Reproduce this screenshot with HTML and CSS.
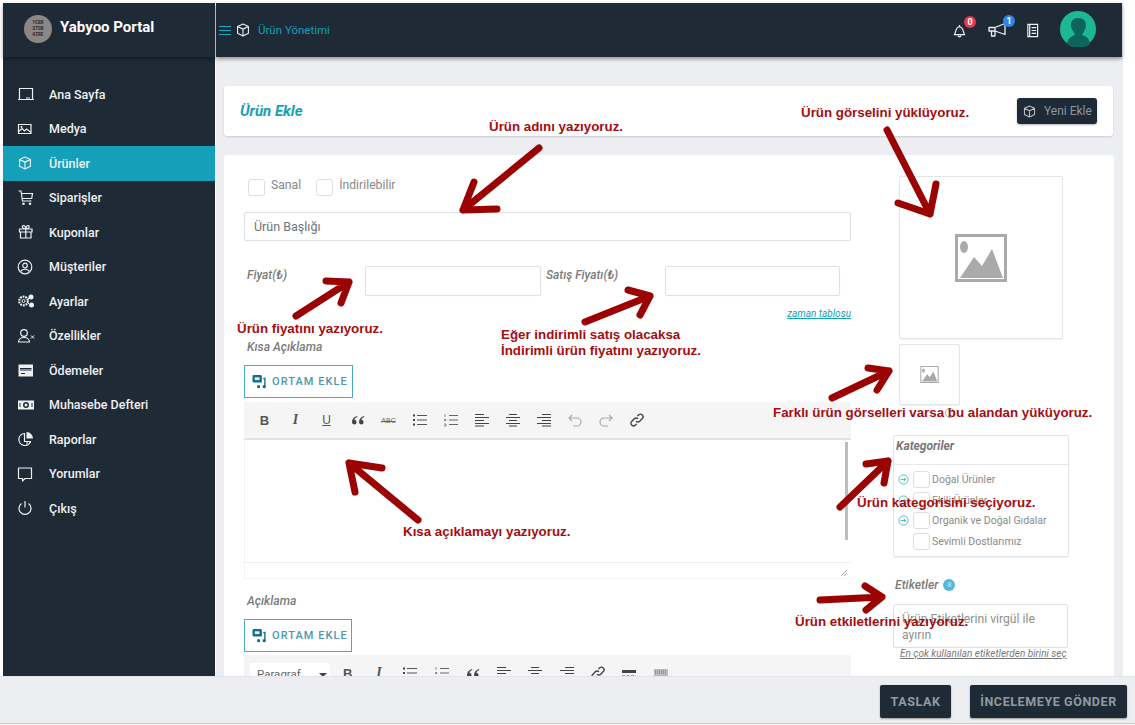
FILE: index.html
```html
<!DOCTYPE html>
<html lang="tr">
<head>
<meta charset="utf-8">
<title>Ürün Ekle</title>
<link rel="stylesheet" href="styles.css">
</head>
<body>
<svg class="defs" width="0" height="0">
  <symbol id="cube" viewBox="0 0 16 16"><path d="M8 1.2 14.2 4v7.6L8 14.8 1.8 11.6V4ZM1.8 4 8 7l6.2-3M8 7v7.8" fill="none" stroke="currentColor" stroke-width="1.3" stroke-linejoin="round"/></symbol>
  <symbol id="media" viewBox="0 0 16 16"><path d="M2 1h7a1.500 1.500 0 0 1 1.500 1.500V9H2a1.500 1.500 0 0 1-1.500-1.500v-5A1.500 1.500 0 0 1 2 1Z" fill="#11708f"/><path d="M3 3.500h5v3H3z" fill="#dff0f5"/><circle cx="7" cy="13.500" r="1.700" fill="#11708f"/><circle cx="13" cy="13.500" r="1.700" fill="#11708f"/><path d="M12 4h2.500v9.500H13V5.500h-1z" fill="#11708f"/></symbol>
  <symbol id="pic" viewBox="0 0 52 48"><path d="M1.500 1.500h49v45h-49z" fill="none" stroke="#aaa" stroke-width="3"/><ellipse cx="9" cy="13" rx="4" ry="6" fill="#aaa"/><path d="M5 44 19 23l8 9 10-17 11 29z" fill="#aaa"/></symbol>
  <symbol id="list" viewBox="0 0 14 14"><path d="M4 2.500h10M4 7h10M4 11.500h10" stroke="#555" stroke-width="1.100"/><path d="M0 2.500h2M0 7h2M0 11.500h2" stroke="#444" stroke-width="2"/></symbol>
  <symbol id="olist" viewBox="0 0 14 14"><path d="M5 2.500h9M5 7h9M5 11.500h9" stroke="#666" stroke-width="1.100"/><path d="M1 1v3M0 6.500h2v1H0M0 11h2v2H0" stroke="#777" stroke-width=".8" fill="none"/></symbol>
  <symbol id="aleft" viewBox="0 0 14 14"><path d="M0 1.500h9M0 4.500h14M0 7.500h9M0 10.500h14M0 13h9" stroke="#444" stroke-width="1.200"/></symbol>
  <symbol id="acenter" viewBox="0 0 14 14"><path d="M3 1.500h8M0 4.500h14M3 7.500h8M0 10.500h14M3 13h8" stroke="#444" stroke-width="1.200"/></symbol>
  <symbol id="aright" viewBox="0 0 14 14"><path d="M5 1.500h9M0 4.500h14M5 7.500h9M0 10.500h14M5 13h9" stroke="#444" stroke-width="1.200"/></symbol>
  <symbol id="link" viewBox="0 0 14 14"><path d="M6 8.200a2.600 2.600 0 0 0 3.700 0l2.600-2.600a2.600 2.600 0 0 0-3.700-3.700L7.400 3.100M8 5.800a2.600 2.600 0 0 0-3.700 0L1.700 8.400a2.600 2.600 0 0 0 3.700 3.700l1.200-1.200" fill="none" stroke="#444" stroke-width="1.400"/></symbol>
  <symbol id="quote" viewBox="0 0 14 14"><path d="M6 3C3 4 1 6 1 9a2.300 2.300 0 1 0 2.400-2.200C3.700 5.500 4.800 4.500 6.400 4ZM13 3c-3 1-5 3-5 6a2.300 2.300 0 1 0 2.400-2.200c.3-1.300 1.400-2.300 3-2.800Z" fill="#444"/></symbol>
  <symbol id="go" viewBox="0 0 12 12"><circle cx="6" cy="6" r="5" fill="none" stroke="#3fb6bf"/><path d="M3 6h5.500M6.200 3.800 8.500 6 6.200 8.200" fill="none" stroke="#3fb6bf"/></symbol>
</svg>
<div class="app">
  <aside class="sidebar">
    <div class="brand">
      <span class="brand-logo"><span>YCBR<br>STOR<br>HIRE</span></span>
      <span class="brand-name">Yabyoo Portal</span>
    </div>
    <nav class="nav">
      <a class="nav-item"><svg class="nav-ico" viewBox="0 0 18 18"><path d="M2.500 3.500h13v11h-13zM1 14.500h16M9 13h4" fill="none" stroke="currentColor" stroke-width="1.200"/></svg>Ana Sayfa</a>
      <a class="nav-item"><svg class="nav-ico" viewBox="0 0 18 18"><path d="M1.500 4.500h12.500v9H1.500zM1.500 11.500l3.500-3 2.500 2.500 2-2 4 3" fill="none" stroke="currentColor" stroke-width="1.200"/><circle cx="4.500" cy="7" r="1" fill="currentColor"/></svg>Medya</a>
      <a class="nav-item active"><svg class="nav-ico" viewBox="0 0 18 18"><use href="#cube" x="1" y="2" width="14" height="14"/></svg>Ürünler</a>
      <a class="nav-item"><svg class="nav-ico" viewBox="0 0 18 18"><path d="M1.500 2h2.500l1.500 10h9M4.300 4.500H15.500l-.8 5H5" fill="none" stroke="currentColor" stroke-width="1.200"/><circle cx="6.500" cy="14.800" r="1.300" fill="currentColor"/><circle cx="13" cy="14.800" r="1.300" fill="currentColor"/></svg>Siparişler</a>
      <a class="nav-item"><svg class="nav-ico" viewBox="0 0 18 18"><path d="M2.500 6h12.500v3H2.500zM3.500 9h10.500v6H3.500zM8.800 6v9M8.800 6C5 6 4.500 2.500 6.500 2.500S8.800 6 8.800 6c0 0 .3-3.500 2.300-3.500S12.500 6 8.800 6Z" fill="none" stroke="currentColor" stroke-width="1.200"/></svg>Kuponlar</a>
      <a class="nav-item"><svg class="nav-ico" viewBox="0 0 18 18"><circle cx="8" cy="9" r="6.800" fill="none" stroke="currentColor" stroke-width="1.200"/><circle cx="8" cy="7.500" r="2.300" fill="none" stroke="currentColor" stroke-width="1.200"/><path d="M3.800 13.500c1-3 7.400-3 8.400 0" fill="none" stroke="currentColor" stroke-width="1.200"/></svg>Müşteriler</a>
      <a class="nav-item"><svg class="nav-ico" viewBox="0 0 18 18"><circle cx="6.500" cy="9" r="4.300" fill="none" stroke="currentColor" stroke-width="2.200" stroke-dasharray="1.800 .9"/><circle cx="6.500" cy="9" r="1.500" fill="none" stroke="currentColor"/><circle cx="14" cy="5" r="2.500" fill="currentColor"/><circle cx="14.500" cy="13" r="2.500" fill="currentColor"/><path d="M10.500 7l2-1M10.500 11l2 1" stroke="currentColor"/></svg>Ayarlar</a>
      <a class="nav-item"><svg class="nav-ico" viewBox="0 0 18 18"><circle cx="7" cy="6" r="3.300" fill="none" stroke="currentColor" stroke-width="1.200"/><path d="M1.500 15c0-6 11-6 11 0z" fill="none" stroke="currentColor" stroke-width="1.200"/><path d="M14 8.500l3 3M17 8.500l-3 3" stroke="currentColor"/></svg>Özellikler</a>
      <a class="nav-item"><svg class="nav-ico" viewBox="0 0 18 18"><path d="M1.500 3.500h14.500v12H1.500z" fill="currentColor"/><path d="M3 7.500h11.500M3 9h11.500" stroke="#1e2a36" stroke-width="1.200"/><path d="M4 12.500h4" stroke="#1e2a36"/></svg>Ödemeler</a>
      <a class="nav-item"><svg class="nav-ico" viewBox="0 0 18 18"><path d="M1 4.500h16v9H1z" fill="currentColor"/><circle cx="9" cy="9" r="3" fill="#1e2a36"/><circle cx="9" cy="9" r="1.500" fill="currentColor"/><path d="M3 7v4M15 7v4" stroke="#1e2a36"/></svg>Muhasebe Defteri</a>
      <a class="nav-item"><svg class="nav-ico" viewBox="0 0 18 18"><path d="M7.500 3.500a6 6 0 1 0 6 8H7.500z" fill="none" stroke="currentColor" stroke-width="1.200"/><path d="M9.500 2v6.500H16A6.500 6.500 0 0 0 9.500 2Z" fill="currentColor"/><path d="M10 11v4M13 11v2" stroke="currentColor"/></svg>Raporlar</a>
      <a class="nav-item"><svg class="nav-ico" viewBox="0 0 18 18"><path d="M1.500 3h13v10.500H8L5.500 16v-2.500h-4z" fill="none" stroke="currentColor" stroke-width="1.200" stroke-linejoin="round"/></svg>Yorumlar</a>
      <a class="nav-item"><svg class="nav-ico" viewBox="0 0 18 18"><path d="M4.500 4.500a6 6 0 1 0 7 0M8 2v6.500" fill="none" stroke="currentColor" stroke-width="1.200"/></svg>Çıkış</a>
    </nav>
  </aside>

  <div class="main">
    <header class="topbar">
      <span class="hamburger"><i></i><i></i><i></i></span>
      <svg class="crumb-ico"><use href="#cube"/></svg>
      <span class="crumb">Ürün Yönetimi</span>
      <div class="top-actions">
        <span class="top-ico ico-bell"><svg viewBox="0 0 16 16"><path d="M2.500 12.500c1.700-1.500.8-8 5.500-8.500 4.700.5 3.800 7 5.500 8.500zM6.300 13.500a1.800 1.800 0 0 0 3.400 0M8 2v2" fill="none" stroke="currentColor" stroke-width="1.300" stroke-linejoin="round"/></svg><b class="badge red">0</b></span>
        <span class="top-ico ico-mega"><svg viewBox="0 0 19 16"><path d="M1 5.500h6l10-4v11l-10-3.500H1zM3.500 9v5h3.500V9M7 5.500V9" fill="none" stroke="currentColor" stroke-width="1.300" stroke-linejoin="round"/></svg><b class="badge blue">1</b></span>
        <span class="top-ico ico-book"><svg viewBox="0 0 14 16"><path d="M2 1.500h10.500v13H2zM4 1.500v13M6 5h5M6 8h5M6 11h5" fill="none" stroke="currentColor" stroke-width="1.300"/></svg></span>
        <span class="avatar"><svg viewBox="0 0 36 36"><circle cx="18" cy="18" r="18" fill="#1eb795"/><path d="M7 33c1-7 6-8 8-9 0-2-3-4-4-9 0-6 3-8 7-8 6 0 8 3 8 8-1 5-3 7-4 9 3 1 7 2 8 9a18 18 0 0 1-23 0Z" fill="#0c6558"/></svg></span>
      </div>
    </header>

    <div class="content">
      <section class="page-head">
        <h1 class="page-title">Ürün Ekle</h1>
        <button class="new-btn"><svg class="new-ico"><use href="#cube"/></svg>Yeni Ekle</button>
      </section>

      <section class="card">
        <div class="left">
          <div class="checks">
            <label class="check-label"><span class="box"></span>Sanal</label>
            <label class="check-label"><span class="box"></span>İndirilebilir</label>
          </div>
          <div class="field title-field">Ürün Başlığı</div>
          <div class="price-row">
            <span class="label price-a">Fiyat(₺)</span>
            <span class="field price-in-a"></span>
            <span class="label price-b">Satış Fiyatı(₺)</span>
            <span class="field price-in-b"></span>
          </div>
          <a class="schedule">zaman tablosu</a>
          <div class="label short-label">Kısa Açıklama</div>
          <button class="media-btn"><svg class="media-ico"><use href="#media"/></svg>ORTAM EKLE</button>
          <div class="editor">
            <div class="toolbar">
              <span class="tb tb-b">B</span><span class="tb tb-i">I</span><span class="tb tb-u">U</span><span class="tb"><svg class="tbi"><use href="#quote"/></svg></span><span class="tb tb-abc">ABC</span>
              <span class="tb"><svg class="tbi"><use href="#list"/></svg></span>
              <span class="tb"><svg class="tbi"><use href="#olist"/></svg></span>
              <span class="tb"><svg class="tbi"><use href="#aleft"/></svg></span>
              <span class="tb"><svg class="tbi"><use href="#acenter"/></svg></span>
              <span class="tb"><svg class="tbi"><use href="#aright"/></svg></span>
              <span class="tb"><svg class="tbi" viewBox="0 0 14 14"><path d="M1 5h8a4 4 0 0 1 0 8H5M4 2 1 5l3 3" fill="none" stroke="#aaa" stroke-width="1.200"/></svg></span>
              <span class="tb"><svg class="tbi" viewBox="0 0 14 14"><path d="M13 5H5a4 4 0 0 0 0 8h4M10 2l3 3-3 3" fill="none" stroke="#aaa" stroke-width="1.200"/></svg></span>
              <span class="tb"><svg class="tbi"><use href="#link"/></svg></span>
            </div>
            <div class="editor-body"><span class="scroll"></span></div>
            <div class="editor-foot"><svg class="grip" viewBox="0 0 8 8"><path d="M7 1 1 7M7 4 4 7" stroke="#aaa"/></svg></div>
          </div>
          <div class="label long-label">Açıklama</div>
          <button class="media-btn media-btn-2"><svg class="media-ico"><use href="#media"/></svg>ORTAM EKLE</button>
          <div class="toolbar toolbar-2">
            <span class="select">Paragraf<i class="caret"></i></span>
            <span class="tb tb-b">B</span><span class="tb tb-i">I</span>
            <span class="tb"><svg class="tbi"><use href="#list"/></svg></span>
            <span class="tb"><svg class="tbi"><use href="#olist"/></svg></span>
            <span class="tb"><svg class="tbi"><use href="#quote"/></svg></span>
            <span class="tb"><svg class="tbi"><use href="#aleft"/></svg></span>
            <span class="tb"><svg class="tbi"><use href="#acenter"/></svg></span>
            <span class="tb"><svg class="tbi"><use href="#aright"/></svg></span>
            <span class="tb"><svg class="tbi"><use href="#link"/></svg></span>
            <span class="tb"><svg class="tbi" viewBox="0 0 14 14"><path d="M0 4h14v3H0z" fill="#444"/><path d="M0 10h14" stroke="#444" stroke-dasharray="3 1.500"/></svg></span>
            <span class="tb"><svg class="tbi" viewBox="0 0 14 14"><path d="M0 3h14v8H0z" fill="#bbb"/><path d="M1 5h12M1 7h12" stroke="#777" stroke-dasharray="1 1"/></svg></span>
          </div>
        </div>

        <div class="right">
          <div class="image-box"><svg class="pic-lg"><use href="#pic"/></svg></div>
          <div class="image-box image-small"><svg class="pic-sm"><use href="#pic"/></svg></div>
          <span class="dot"></span>
          <div class="cats">
            <div class="cats-title">Kategoriler</div>
            <ul class="cat-list">
              <li class="cat"><svg class="go"><use href="#go"/></svg><span class="box"></span>Doğal Ürünler</li>
              <li class="cat"><svg class="go"><use href="#go"/></svg><span class="box"></span>Ekili Ürünler</li>
              <li class="cat"><svg class="go"><use href="#go"/></svg><span class="box"></span>Organik ve Doğal Gıdalar</li>
              <li class="cat"><span class="go"></span><span class="box"></span>Sevimli Dostlarımız</li>
            </ul>
          </div>
          <div class="tags-head"><span class="label tags-label">Etiketler</span><span class="info">8</span></div>
          <div class="tags-input">Ürün Etiketlerini virgül ile ayırın</div>
          <a class="tags-link">En çok kullanılan etiketlerden birini seç</a>
        </div>
      </section>
    </div>
  </div>
</div>

<footer class="actions">
  <button class="dark-btn btn-draft">TASLAK</button>
  <button class="dark-btn btn-send">İNCELEMEYE GÖNDER</button>
</footer>

<svg class="arrows" viewBox="0 0 1135 725">
  <g fill="none" stroke="#9b0303" stroke-width="7" stroke-linecap="round" stroke-linejoin="round">
    <path d="M539 148 463 210M474 182 463 210 497 209"/>
    <path d="M887 130 930 214M898 203 930 214 936 184"/>
    <path d="M296 316 349 282M326 281 349 282 341 303"/>
    <path d="M585 322 650 296M628 290 650 296 640 315"/>
    <path d="M832 398 889 371M868 368 889 371 877 390"/>
    <path d="M840 507 888 461M866 464 888 461 884 483"/>
    <path d="M820 600 882 597M865 586 882 597 866 610"/>
    <path d="M418 520 349 463M355 492 349 463 382 468"/>
  </g>
</svg>
<span class="note note-name">Ürün adını yazıyoruz.</span>
<span class="note note-image">Ürün görselini yüklüyoruz.</span>
<span class="note note-price">Ürün fiyatını yazıyoruz.</span>
<span class="note note-sale">Eğer indirimli satış olacaksa<br>İndirimli ürün fiyatını yazıyoruz.</span>
<span class="note note-gallery">Farklı ürün görselleri varsa bu alandan yüküyoruz.</span>
<span class="note note-cat">Ürün kategorisini seçiyoruz.</span>
<span class="note note-short">Kısa açıklamayı yazıyoruz.</span>
<span class="note note-tags">Ürün etkiletlerini yazıyoruz.</span>
</body>
</html>
```
FILE: styles.css
```css
* { box-sizing: border-box; }
html, body { margin: 0; height: 725px; overflow: hidden; background: #fff; }
body { font-family: Roboto, "Liberation Sans", sans-serif; position: relative; }
.defs { position: absolute; }
button { font-family: inherit; cursor: pointer; }

.app { display: flex; height: 723px; padding: 3px 12px 0 3px; overflow: hidden; }

/* sidebar */
.sidebar { width: 212px; flex: none; background: #1e2a36; color: #f0f2f4; }
.brand { height: 54px; display: flex; align-items: center; padding-left: 21px; gap: 8px; box-shadow: 0 2px 4px rgba(0,0,0,.35); padding-bottom: 2px; }
.brand-logo { width: 28px; height: 28px; border-radius: 50%; background: #8a8786; display: flex; align-items: center; justify-content: center; text-align: center; font: 700 4.500px/1.300 "Liberation Mono", monospace; color: #2b2a2a; }
.brand-name { font-weight: 700; font-size: 15px; color: #fff; margin-top: -5px; }
.nav { padding-top: 20px; display: flex; flex-direction: column; }
.nav-item { height: 34.500px; display: flex; align-items: center; padding-left: 14px; font-size: 12.500px; font-weight: 500; color: #eef0f2; }
.nav-item.active { background: #14a0b8; }
.nav-ico { width: 18px; height: 18px; margin-right: 14px; flex: none; color: #eef0f2; }

/* main */
.main { flex: 1; min-width: 0; margin-left: 1px; background: #eceef2; display: flex; flex-direction: column; }
.topbar { height: 54px; flex: none; margin-right: 1px; background: #1e2a36; display: flex; align-items: center; padding-left: 3px; box-shadow: 0 2px 4px rgba(0,0,0,.4); }
.hamburger { width: 12px; display: flex; flex-direction: column; gap: 3px; margin-right: 5px; }
.hamburger i { display: block; height: 1px; background: #21a8c2; }
.crumb-ico { width: 14px; height: 14px; color: #e8ecef; margin-right: 8px; }
.crumb { font-size: 11.500px; color: #149fb5; }
.top-actions { margin-left: auto; display: flex; align-items: center; }
.top-ico { position: relative; color: #eef1f3; display: block; }
.top-ico svg { display: block; width: 100%; height: 100%; }
.ico-bell { width: 15px; height: 15px; margin-right: 21px; }
.ico-mega { width: 19px; height: 16px; margin-right: 19px; }
.ico-book { width: 13px; height: 15px; margin-right: 21px; }
.badge { position: absolute; top: -7px; left: 12px; width: 12px; height: 12px; border-radius: 50%; color: #fff; font-size: 9px; line-height: 12px; text-align: center; font-weight: 700; }
.badge.red { background: #e53a4b; }
.badge.blue { background: #2f86e8; left: 15px; }
.avatar { width: 36px; height: 36px; margin-right: 26px; margin-top: -2px; }
.avatar svg { display: block; }

.content { padding: 29px 9px 0 8px; flex: 1; min-height: 0; }
.page-head { height: 50px; margin-right: 1px; background: #fff; border-radius: 3px; display: flex; align-items: center; justify-content: space-between; padding: 0 16px 0 16px; box-shadow: 0 1px 2px rgba(0,0,0,.14); }
.page-title { margin: 0; font-size: 15px; font-weight: 700; font-style: italic; color: #149fb0; }
.new-btn { height: 26px; width: 80px; padding: 0 0 0 6px; background: #1e2a36; border: 0; border-radius: 3px; color: #8b969e; font-size: 12px; display: flex; align-items: center; gap: 8px; box-shadow: 0 1px 2px rgba(0,0,0,.3); }
.new-ico { width: 13px; height: 13px; color: #b9c1c7; }

.card { margin-top: 19px; height: 560px; background: #fff; border-radius: 3px; padding: 21px 20px 0; display: grid; grid-template-columns: 607px 176px; column-gap: 42px; overflow: hidden; }
.left { padding-top: 3px; min-width: 0; }
.checks { display: flex; gap: 15px; padding-left: 4px; height: 17px; }
.check-label { display: flex; gap: 6px; font-size: 12.200px; color: #888; line-height: 12px; }
.box { display: block; flex: none; width: 17px; height: 17px; border: 1px solid #dcdfe2; border-radius: 3px; background: #fff; }
.field { display: block; flex: none; height: 29px; background: #fff; border: 1px solid #dfe1e4; border-radius: 2px; box-shadow: 0 0 1px rgba(0,0,0,.08); font-size: 12.500px; color: #6f7478; line-height: 27px; padding-left: 9px; }
.title-field { margin-top: 16px; }
.price-row { margin-top: 25px; display: flex; align-items: flex-start; }
.label { font-size: 12.200px; font-weight: 500; font-style: italic; color: #7a7a7a; }
.price-a, .price-b { font-size: 12px; line-height: 19px; flex: none; }
.price-a { width: 121px; padding-left: 3px; }
.price-in-a { width: 176px; height: 30px; }
.price-b { width: 119px; margin-left: 5px; }
.price-in-b { width: 175px; height: 30px; }
.schedule { display: block; text-align: right; font-size: 10px; font-style: italic; color: #14a0b0; text-decoration: underline; margin-top: 12px; line-height: 12px; }
.short-label { margin-top: 20px; padding-left: 3px; line-height: 14px; }
.media-btn { display: flex; align-items: center; gap: 5px; margin-top: 11px; width: 109px; height: 33px; padding: 0 0 0 7px; background: #fff; border: 1px solid #4ba9c0; font-size: 11px; font-weight: 500; letter-spacing: 1.050px; color: #4d98ad; white-space: nowrap; }
.media-ico { width: 15px; height: 15px; flex: none; }
.editor { margin-top: 4px; }
.toolbar { height: 36px; background: #f5f5f5; display: flex; align-items: center; padding-left: 5px; }
.tb { width: 31px; height: 16px; display: flex; align-items: center; justify-content: center; flex: none; font-size: 13px; color: #555; font-family: "Liberation Serif", serif; }
.tb-b { font: 700 13px "Liberation Sans", sans-serif; color: #555; }
.tb-i { font: italic 700 14px "Liberation Serif", serif; color: #555; }
.tb-u { font: 12px "Liberation Sans", sans-serif; text-decoration: underline; color: #555; }
.tb-abc { font: 7px "Liberation Sans", sans-serif; color: #666; text-decoration: line-through; }
.tbi { width: 14px; height: 14px; display: block; }
.editor-body { height: 124px; border-top: 2px solid #e2e2e2; border-left: 1px solid #f2f2f2; display: flex; justify-content: flex-end; padding: 2px 3px 0 0; }
.scroll { width: 3px; height: 98px; background: #bdbdbd; }
.editor-foot { height: 17px; border-top: 1px solid #eee; border-bottom: 1px solid #f4f4f4; border-left: 1px solid #f2f2f2; display: flex; justify-content: flex-end; align-items: flex-end; padding: 0 3px 1px 0; }
.grip { width: 8px; height: 8px; }
.long-label { margin-top: 15px; padding-left: 3px; line-height: 14px; }
.media-btn-2 { width: 108px; }
.toolbar-2 { margin-top: 3px; align-items: flex-start; padding: 8px 0 0 6px; height: 40px; }
.select { width: 80px; height: 24px; margin-right: 2px; background: #fff; border-radius: 2px; font-size: 11.500px; color: #666; padding: 4px 0 0 7px; position: relative; }
.caret { position: absolute; right: 3px; top: 10px; border: 4px solid transparent; border-top: 4px solid #444; border-bottom: 0; }
.toolbar-2 .tb { margin-top: 2px; width: 31.300px; }

.right { min-width: 0; }
.image-box { width: 164px; height: 163px; margin-left: 6px; border: 1px solid #e3e5e7; border-radius: 2px; box-shadow: 0 1px 1px rgba(0,0,0,.05); display: flex; align-items: center; justify-content: center; }
.pic-lg { width: 52px; height: 48px; }
.image-small { width: 61px; height: 61px; margin-top: 5px; }
.pic-sm { width: 19px; height: 17px; }
.dot { display: block; width: 10px; height: 10px; margin: 3px 0 0 52px; border: 1px solid #aaa; border-radius: 50%; }
.cats { margin-top: 17px; width: 176px; height: 122px; border: 1px solid #e3e5e7; border-radius: 2px; box-shadow: 0 1px 1px rgba(0,0,0,.06); }
.cats-title { height: 29px; border-bottom: 1px solid #e6e8ea; padding: 3px 0 0 2px; font-size: 12px; font-weight: 700; font-style: italic; color: #777; line-height: 14px; }
.cat-list { list-style: none; margin: 0; padding: 4px 0 0 4px; }
.cat { height: 20.700px; display: flex; align-items: center; font-size: 10.500px; color: #8a8a8a; }
.go { display: block; width: 11px; height: 11px; flex: none; margin-right: 4px; }
.cat .box { margin-right: 2px; }
.tags-head { margin-top: 21px; display: flex; align-items: center; gap: 5px; padding-left: 2px; height: 14px; }
.info { width: 12px; height: 12px; border-radius: 50%; background: #54b6dc; color: #d6f0fa; font-size: 7px; line-height: 12px; text-align: center; }
.tags-input { margin-top: 12px; width: 175px; height: 44px; padding: 6px 6px 0 8px; border: 1px solid #dfe1e4; border-radius: 2px; font-size: 12.200px; line-height: 16px; color: #8f8f8f; }
.tags-link { display: block; margin: 0 0 0 7px; font-size: 10px; line-height: 12px; font-style: italic; color: #777; text-decoration: underline; white-space: nowrap; }

/* footer */
.actions { position: absolute; left: 0; top: 676px; width: 1135px; height: 47px; background: #eceef2; border-top: 1px solid #e2e4e8; box-shadow: 0 1px 1px rgba(0,0,0,.2); display: flex; justify-content: flex-end; gap: 19px; padding: 8px 8px 0 0; }
.dark-btn { height: 33px; border: 0; border-radius: 2px; background: #1e2a36; color: #8f9aa3; font-size: 12.500px; font-weight: 700; letter-spacing: .6px; box-shadow: 0 1px 2px rgba(0,0,0,.35); padding: 0; }
.btn-draft { width: 71px; }
.btn-send { width: 157px; }

/* annotations */
.arrows { position: absolute; left: 0; top: 0; width: 1135px; height: 725px; pointer-events: none; }
.note { position: absolute; font: 700 13.330px/18px "Liberation Sans", Arial, sans-serif; color: #a50d10; white-space: nowrap; }
.note-name { left: 489px; top: 118px; }
.note-image { left: 801px; top: 104px; }
.note-price { left: 237px; top: 320px; }
.note-sale { left: 501px; top: 327px; line-height: 16px; }
.note-gallery { left: 773px; top: 404px; }
.note-cat { left: 857px; top: 494px; }
.note-short { left: 403px; top: 523px; }
.note-tags { left: 795px; top: 613px; }
```
